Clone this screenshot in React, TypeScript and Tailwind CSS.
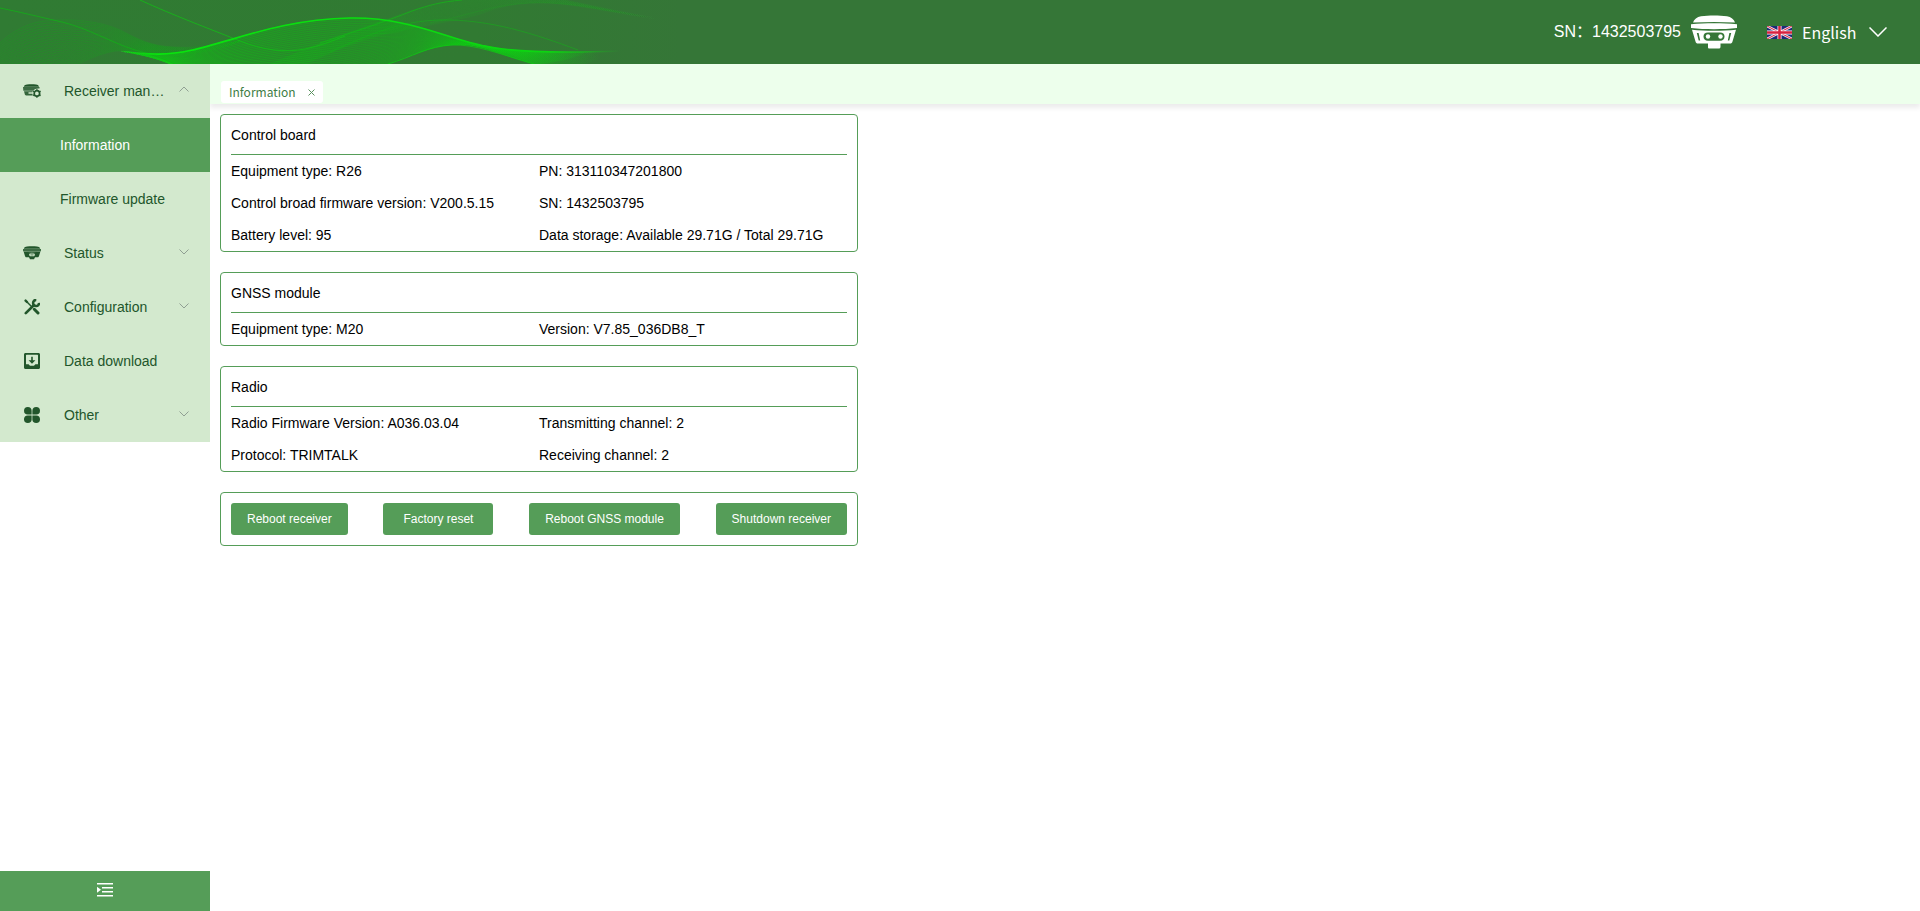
import clsx from "clsx";
import { useState } from "react";

type Point = [number, number];

// Every wave has four cubic segments, so two of them can be blended
const WAVES: Record<string, Point[]> = {
  crest: [
    [120, 51], [132, 52], [142, 54], [155, 54],
    [208, 56], [258, 20], [350, 18], [410, 17],
    [450, 40], [485, 46], [510, 52], [560, 53], [620, 51],
  ],
  under: [
    [120, 51], [140, 54], [158, 58], [175, 66],
    [220, 84], [290, 92], [350, 76], [400, 62],
    [440, 36], [480, 47], [505, 53], [525, 66], [570, 70],
  ],
  humpTop: [
    [-10, 52], [5, 38], [20, 24], [45, 21],
    [70, 18], [100, 21], [120, 30], [140, 40],
    [150, 46], [175, 47], [195, 48], [220, 45], [240, 41],
  ],
  humpBottom: [
    [-10, 96], [10, 92], [30, 84], [50, 76],
    [75, 66], [95, 54], [115, 51], [130, 50],
    [145, 52], [155, 54], [175, 56], [215, 54], [240, 41],
  ],
  fanTop: [
    [270, 64], [300, 52], [330, 38], [360, 29],
    [390, 19], [420, 5], [460, -1], [500, -7],
    [540, -6], [570, 1], [600, 7], [630, 14], [660, 18],
  ],
  fanBottom: [
    [290, 72], [320, 56], [350, 44], [380, 35],
    [410, 28], [450, 22], [480, 14], [505, 4],
    [530, 1], [560, 4], [590, 7], [620, 14], [660, 20],
  ],
};

function toPath(p: Point[]) {
  const at = (i: number) => `${p[i][0]} ${p[i][1]}`;
  let d = `M${at(0)}`;
  for (let i = 1; i < p.length; i += 3) {
    d += `C${at(i)} ${at(i + 1)} ${at(i + 2)}`;
  }
  return d;
}

function blend(a: Point[], b: Point[], count: number) {
  return Array.from({ length: count }, (_, i) => {
    const t = i / (count - 1);
    return toPath(
      a.map(([x, y], k): Point => [
        x + (b[k][0] - x) * t,
        y + (b[k][1] - y) * t,
      ])
    );
  });
}

function HeaderWaves() {
  return (
    <svg
      width="680"
      height="64"
      viewBox="0 0 680 64"
      fill="none"
      className="absolute left-0 top-0"
      aria-hidden="true"
    >
      <defs>
        <linearGradient id="base" x1="0" x2="680" y1="0" y2="0" gradientUnits="userSpaceOnUse">
          <stop offset="0" stopColor="#307b33" />
          <stop offset="0.7" stopColor="#317a32" />
          <stop offset="1" stopColor="#357637" />
        </linearGradient>
        <linearGradient id="crest" x1="120" x2="620" y1="0" y2="0" gradientUnits="userSpaceOnUse">
          <stop offset="0" stopColor="#0be010" stopOpacity="0" />
          <stop offset="0.07" stopColor="#08e60d" />
          <stop offset="0.85" stopColor="#0cd511" />
          <stop offset="1" stopColor="#0cd511" stopOpacity="0" />
        </linearGradient>
        <linearGradient id="body" x1="120" x2="600" y1="0" y2="0" gradientUnits="userSpaceOnUse">
          <stop offset="0" stopColor="#10c814" stopOpacity="0" />
          <stop offset="0.1" stopColor="#10c814" stopOpacity="0.55" />
          <stop offset="0.5" stopColor="#10c814" stopOpacity="0.28" />
          <stop offset="0.84" stopColor="#10c814" stopOpacity="0.4" />
          <stop offset="1" stopColor="#10c814" stopOpacity="0" />
        </linearGradient>
        <linearGradient id="hump" x1="0" x2="200" y1="0" y2="0" gradientUnits="userSpaceOnUse">
          <stop offset="0" stopColor="#12a517" stopOpacity="0.5" />
          <stop offset="0.75" stopColor="#12a517" stopOpacity="0.4" />
          <stop offset="1" stopColor="#12a517" stopOpacity="0.1" />
        </linearGradient>
        <linearGradient id="fan" x1="280" x2="660" y1="0" y2="0" gradientUnits="userSpaceOnUse">
          <stop offset="0" stopColor="#16ae1a" stopOpacity="0.4" />
          <stop offset="0.6" stopColor="#16ae1a" stopOpacity="0.15" />
          <stop offset="1" stopColor="#16ae1a" stopOpacity="0" />
        </linearGradient>
      </defs>
      <rect width="680" height="64" fill="url(#base)" />
      <g stroke="url(#hump)" strokeWidth="0.7">
        {blend(WAVES.humpTop, WAVES.humpBottom, 24).map((d) => (
          <path key={d} d={d} />
        ))}
      </g>
      <g stroke="url(#fan)" strokeWidth="0.8">
        {blend(WAVES.fanTop, WAVES.fanBottom, 18).map((d) => (
          <path key={d} d={d} />
        ))}
      </g>
      <g stroke="url(#body)" strokeWidth="0.9">
        {blend(WAVES.crest, WAVES.under, 32).map((d) => (
          <path key={d} d={d} />
        ))}
      </g>
      <path d="M155 54C208 56 258 20 350 18C410 17 450 40 485 46C460 42 445 44 425 51L388 64H176Z" fill="#0fb514" fillOpacity="0.24" />
      <path d="M485 47C520 53 555 52 590 51C575 58 560 62 540 64H534C518 59 503 51 485 47Z" fill="url(#body)" />
      <path d="M0 8C20 12 40 17 62 22C90 29 110 42 135 50C150 54 162 58 175 64" stroke="#10b514" strokeOpacity="0.7" />
      <path d="M140 0C175 16 205 27 240 41C262 50 285 53 305 49C320 46 332 41 345 36" stroke="#0fc513" strokeOpacity="0.7" />
      <path d="M388 64C412 57 428 46 452 45C475 44 500 54 534 64" stroke="#0fcb13" strokeOpacity="0.8" />
      <path d="M320 43C350 33 385 22 412 11C430 5 440 2 462 0" stroke="#10c014" strokeOpacity="0.6" />
      <path d="M330 52C370 34 400 21 440 20C490 19 535 34 578 50" stroke="#12b516" strokeOpacity="0.5" />
      <path d="M430 23C470 15 495 4 530 3C570 1 600 10 640 15" stroke="url(#fan)" />
      <path d={toPath(WAVES.crest)} stroke="url(#crest)" strokeWidth="1.6" />
    </svg>
  );
}

function ReceiverIcon() {
  return (
    <svg width="46" height="34" viewBox="0 0 46 34" fill="#fff" className="shrink-0" aria-hidden="true">
      <path d="M2 7.500C3 4 6 2 10 1.200C18 .1 28 .1 36 1.200C40 2 43 4 44 7.500C30 6.800 16 6.800 2 7.500Z" />
      <path d="M0 9.200C14 7.800 32 7.800 46 9.200V13C32 14.600 14 14.600 0 13Z" />
      <path
        fillRule="evenodd"
        d="M1 14.800C14 16.200 32 16.200 45 14.800L41.500 26.500C41 28 40.500 28.500 39 28.500H29.500V31.500C29.500 33 29 33.500 27.500 33.500H18.500C17 33.500 17 33 17 31.500V28.500H7C5.500 28.500 5 28 4.500 26.500ZM17 17.500C14 17.500 12.500 19 12.500 21.500C12.500 24 14 25.700 17 25.700H29C32 25.700 33.500 24 33.500 21.500C33.500 19 32 17.500 29 17.500ZM5.800 18L7.700 25.500H9.200L7.600 18ZM40.200 18L38.300 25.500H36.800L38.400 18Z"
      />
      <circle cx="17" cy="21.500" r="2.200" />
      <circle cx="29.500" cy="21.500" r="2.200" />
    </svg>
  );
}

function FlagIcon() {
  return (
    <svg width="25" height="13" viewBox="0 0 50 26" className="shrink-0" aria-hidden="true">
      <path fill="#1c2a78" d="M0 0h50v26H0z" />
      <path stroke="#f3e9f0" strokeWidth="5" d="M0 0L50 26M50 0L0 26" />
      <path stroke="#d8213f" strokeWidth="2" d="M0 0L50 26M50 0L0 26" />
      <path stroke="#fff" strokeWidth="8" d="M25 0V26M0 13H50" />
      <path stroke="#d8213f" strokeWidth="5" d="M25 0V26M0 13H50" />
    </svg>
  );
}

function ManageIcon() {
  return (
    <svg width="18" height="14" viewBox="0 0 18 14" fill="currentColor" aria-hidden="true">
      <path d="M.8 2.800C1.500 1 2.600.7 4 .6C7 .2 10 .2 13 .6C14.500.8 15.600 1.200 16 2.800Z" />
      <path opacity="0.85" d="M0 3.100H16.500V4.600C14 4.200 11.500 5 10.200 6.800H0.300Z" />
      <path opacity="0.9" d="M1 7.200H9.800L9.400 8.200H5.500V9.800H9.400L9.800 11.400H3.200C2.300 11.400 2 11 1.800 10.300Z" />
      <circle cx="13.900" cy="9.400" r="2.700" fill="none" stroke="currentColor" strokeWidth="1.700" />
      <path
        fill="none"
        stroke="currentColor"
        strokeWidth="1.400"
        d="M13.900 5.200v1.400M13.900 12.300v1.500M10.200 7.200l1.200.7M16.400 10.900l1.200.7M10.200 11.600l1.200-.7M16.400 7.900l1.200-.7"
      />
    </svg>
  );
}

function StatusIcon() {
  return (
    <svg width="18" height="14" viewBox="0 0 18 14" fill="currentColor" aria-hidden="true">
      <path d="M.8 2.700C1.500 1 2.600.8 4 .6C7.300.2 10.700.2 14 .6C15.400.8 16.500 1 17.200 2.700Z" />
      <path opacity="0.85" d="M0 3H18V5.200C12 5.900 6 5.900 0 5.200Z" />
      <path
        fillRule="evenodd"
        d="M.6 5.600C6 6.300 12 6.300 17.400 5.600L16 10C15.700 11 15.400 11.300 14.500 11.300H12L11 13.200H7L6 11.300H3.500C2.600 11.300 2.300 11 2 10ZM6.700 7.500L6 9L7 10.200H11L12 9L11.300 7.500Z"
      />
      <path opacity="0.4" d="M7.500 8H10.500V9.700H7.500Z" />
    </svg>
  );
}

function ToolsIcon() {
  return (
    <svg
      width="16"
      height="16"
      viewBox="0 0 16 16"
      fill="none"
      stroke="currentColor"
      strokeLinecap="round"
      aria-hidden="true"
    >
      <path strokeWidth="2.600" d="M1.800 14.200L9.500 6.500" />
      <path strokeWidth="2.600" strokeLinecap="butt" d="M12.300 1A3 3 0 1 0 15.100 3.800" />
      <path strokeWidth="2.400" d="M1.600 1.600L3 3" />
      <path strokeWidth="1.500" d="M3 3L7 7" />
      <path strokeWidth="3" d="M10.300 10.300L14 14" />
    </svg>
  );
}

function DownloadIcon() {
  return (
    <svg width="16" height="16" viewBox="0 0 16 16" fill="currentColor" aria-hidden="true">
      <path
        fillRule="evenodd"
        d="M1.500 0H14.500C15.400 0 16 .6 16 1.500V14.500C16 15.400 15.400 16 14.500 16H1.500C.6 16 0 15.400 0 14.500V1.500C0 .6.6 0 1.500 0ZM2.600 1.800Q2 1.800 2 2.400V11.200H4.600L6 12.800H10L11.400 11.200H14V2.400Q14 1.800 13.400 1.800Z"
      />
      <path d="M7.200 3.800H8.800V7.200H11.400L8 10.800L4.600 7.200H7.200Z" />
    </svg>
  );
}

function OtherIcon() {
  return (
    <svg width="16" height="16" viewBox="0 0 16 16" fill="currentColor" aria-hidden="true">
      <path d="M3.800 0A3.800 3.800 0 0 1 7.600 3.800V7.600H3.800A3.800 3.800 0 0 1 3.800 0Z" />
      <path d="M12.200 0A3.800 3.800 0 0 1 12.200 7.600H8.400V3.800A3.800 3.800 0 0 1 12.200 0Z" />
      <path d="M3.800 8.400H7.600V12.200A3.800 3.800 0 1 1 3.800 8.400Z" />
      <path d="M8.400 8.400H12.200A3.800 3.800 0 1 1 8.400 12.200Z" />
    </svg>
  );
}

function Arrow({ up }: { up?: boolean }) {
  return (
    <svg
      width="12"
      height="12"
      viewBox="0 0 12 12"
      fill="none"
      stroke="#909f93"
      className="mb-1 shrink-0"
      aria-hidden="true"
    >
      <path d={up ? "M1.500 8.500L6 4L10.500 8.500" : "M1.500 4.500L6 9L10.500 4.500"} />
    </svg>
  );
}

const MENU = [
  {
    title: "Receiver management",
    icon: <ManageIcon />,
    expandable: true,
    children: ["Information", "Firmware update"],
  },
  { title: "Status", icon: <StatusIcon />, expandable: true },
  { title: "Configuration", icon: <ToolsIcon />, expandable: true },
  { title: "Data download", icon: <DownloadIcon /> },
  { title: "Other", icon: <OtherIcon />, expandable: true },
];

const CARDS = [
  {
    title: "Control board",
    items: [
      ["Equipment type", "R26"],
      ["PN", "313110347201800"],
      ["Control broad firmware version", "V200.5.15"],
      ["SN", "1432503795"],
      ["Battery level", "95"],
      ["Data storage", "Available 29.71G / Total 29.71G"],
    ],
  },
  {
    title: "GNSS module",
    items: [
      ["Equipment type", "M20"],
      ["Version", "V7.85_036DB8_T"],
    ],
  },
  {
    title: "Radio",
    items: [
      ["Radio Firmware Version", "A036.03.04"],
      ["Transmitting channel", "2"],
      ["Protocol", "TRIMTALK"],
      ["Receiving channel", "2"],
    ],
  },
];

const ACTIONS = [
  "Reboot receiver",
  "Factory reset",
  "Reboot GNSS module",
  "Shutdown receiver",
];

export default function App() {
  const [active, setActive] = useState("Information");
  const [open, setOpen] = useState("Receiver management");

  return (
    <div className="min-h-screen flex flex-col bg-white text-sm text-black font-['Liberation_Sans','Noto_Sans_CJK_SC',sans-serif]">
      {/* Header */}
      <header className="relative h-16 shrink-0 flex items-center justify-end bg-[#357637] pr-[33px] text-base text-white">
        <HeaderWaves />
        <span>SN：1432503795</span>
        <span className="ml-2.5">
          <ReceiverIcon />
        </span>
        <div className="ml-[30px] flex items-center font-['Noto_Sans_CJK_SC',sans-serif]">
          <FlagIcon />
          <select
            aria-label="Language"
            className="ml-2.5 w-[67px] appearance-none bg-transparent outline-none"
          >
            <option>English</option>
          </select>
          <svg
            width="18"
            height="10"
            viewBox="0 0 18 10"
            fill="none"
            stroke="#fff"
            strokeWidth="1.5"
            aria-hidden="true"
          >
            <path d="M.5 .5L9 9L17.500 .5" />
          </svg>
        </div>
      </header>

      <div className="flex flex-1">
        {/* Sidebar */}
        <aside className="z-10 w-[210px] shrink-0 flex flex-col justify-between bg-white">
          <nav className="bg-[#d3e9ce] text-[#22562b]">
            {MENU.map((item) => (
              <div key={item.title}>
                <button
                  onClick={() => setOpen(open === item.title ? "" : item.title)}
                  className="flex h-[54px] w-full items-center pl-[23px] pr-5 text-left"
                >
                  <span className="flex w-[18px] shrink-0 justify-center">
                    {item.icon}
                  </span>
                  <span className="ml-[23px] mr-2.5 flex-1 truncate">
                    {item.title}
                  </span>
                  {item.expandable && <Arrow up={open === item.title} />}
                </button>
                {open === item.title &&
                  item.children?.map((child) => (
                    <a
                      key={child}
                      href="#"
                      onClick={() => setActive(child)}
                      className={clsx(
                        "flex h-[54px] items-center pl-[60px]",
                        active === child && "bg-[#559d58] text-white"
                      )}
                    >
                      {child}
                    </a>
                  ))}
              </div>
            ))}
          </nav>
          <button
            aria-label="Collapse menu"
            className="flex h-10 w-full items-center justify-center bg-[#559d58] pb-0.5 text-white"
          >
            <svg width="16" height="14" viewBox="0 0 16 14" fill="currentColor" aria-hidden="true">
              <path d="M0 0H16V1.500H0ZM5 4H16V5.500H5ZM5 8H16V9.500H5ZM0 12H16V13.500H0ZM0 3.700L4 6.750L0 9.800Z" />
            </svg>
          </button>
        </aside>

        <div className="flex min-w-0 flex-1 flex-col">
          {/* Tabs */}
          <div className="flex h-10 items-end bg-[#edffec] pb-px pl-[11px] shadow-[0_4px_5px_rgba(0,0,0,0.08)]">
            <div className="flex h-[22px] items-center rounded-[3px] bg-white px-2 text-xs text-[#3f7d45] font-['Noto_Sans_CJK_SC',sans-serif]">
              <a href="#">Information</a>
              <button aria-label="Close tab" className="ml-3">
                <svg width="7" height="7" viewBox="0 0 7 7" stroke="#5b9160" aria-hidden="true">
                  <path d="M.5 .5L6.500 6.500M6.500 .5L.5 6.500" />
                </svg>
              </button>
            </div>
          </div>

          {/* Content */}
          <main className="flex w-full max-w-[658px] flex-col gap-5 p-2.5">
            {CARDS.map((card) => (
              <section
                key={card.title}
                className="rounded border border-[#559d58] px-2.5"
              >
                <h2 className="h-10 border-b border-[#559d58] leading-10">
                  {card.title}
                </h2>
                <div className="grid grid-cols-2">
                  {card.items.map(([label, value]) => (
                    <p key={label} className="leading-8">
                      {label}: {value}
                    </p>
                  ))}
                </div>
              </section>
            ))}
            <section className="flex justify-between rounded border border-[#559d58] p-2.5">
              {ACTIONS.map((action) => (
                <button
                  key={action}
                  className="h-8 min-w-[110px] rounded-[3px] bg-[#559d58] px-4 text-xs font-medium text-white"
                >
                  {action}
                </button>
              ))}
            </section>
          </main>
        </div>
      </div>
    </div>
  );
}
